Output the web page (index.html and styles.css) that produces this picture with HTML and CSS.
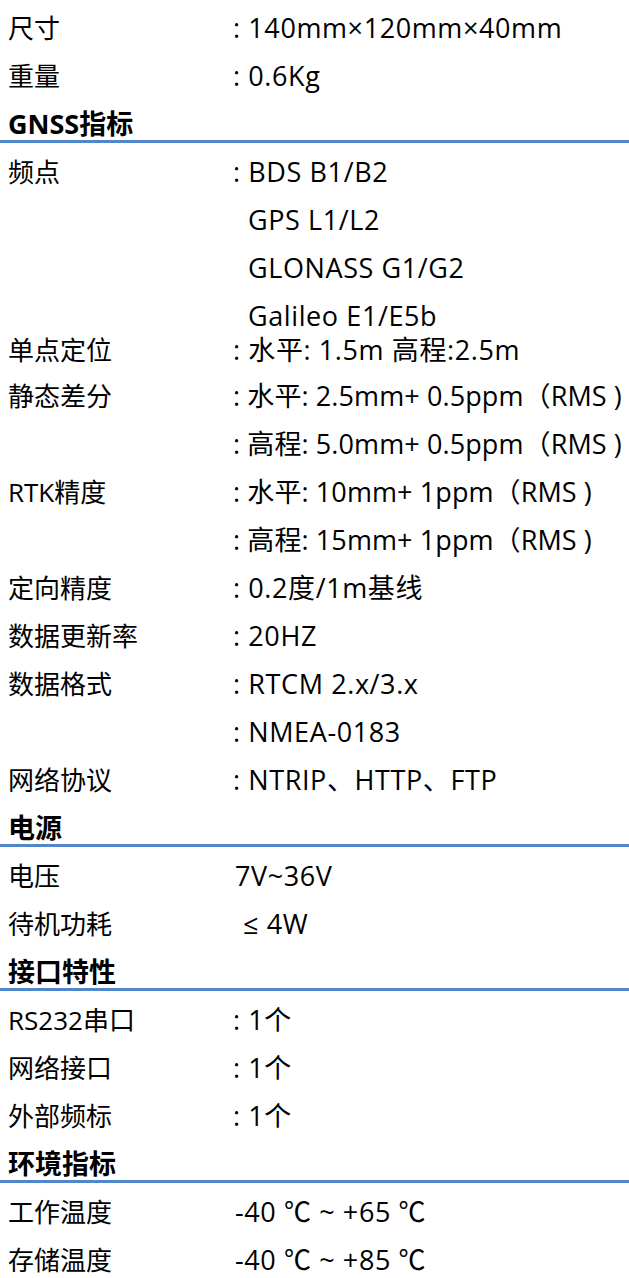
FILE: index.html
```html
<!DOCTYPE html>
<html lang="zh-CN">
<head>
<meta charset="utf-8">
<title>产品参数</title>
<link rel="stylesheet" href="styles.css">
</head>
<body>
<div class="spec">
  <div class="row"><div class="label">尺寸</div><div class="value">: 140mm×120mm×40mm</div></div>
  <div class="row"><div class="label">重量</div><div class="value">: 0.6Kg</div></div>

  <div class="section">GNSS指标</div>
  <div class="row"><div class="label">频点</div>
    <div class="value">
      <div>: BDS B1/B2</div>
      <div class="indent">GPS L1/L2</div>
      <div class="indent">GLONASS G1/G2</div>
      <div class="indent">Galileo E1/E5b</div>
    </div>
  </div>
  <div class="row row-tight"><div class="label">单点定位</div><div class="value">: 水平: 1.5m 高程:2.5m</div></div>
  <div class="row row-nudge"><div class="label">静态差分</div>
    <div class="value">
      <div class="tight">: 水平: 2.5mm+ 0.5ppm（RMS )</div>
      <div class="tight">: 高程: 5.0mm+ 0.5ppm（RMS )</div>
    </div>
  </div>
  <div class="row"><div class="label">RTK精度</div>
    <div class="value">
      <div class="tight">: 水平: 10mm+ 1ppm（RMS )</div>
      <div class="tight">: 高程: 15mm+ 1ppm（RMS )</div>
    </div>
  </div>
  <div class="row"><div class="label">定向精度</div><div class="value">: 0.2度/1m基线</div></div>
  <div class="row"><div class="label">数据更新率</div><div class="value">: 20HZ</div></div>
  <div class="row"><div class="label">数据格式</div>
    <div class="value">
      <div>: RTCM 2.x/3.x</div>
      <div>: NMEA-0183</div>
    </div>
  </div>
  <div class="row"><div class="label">网络协议</div><div class="value">: NTRIP、HTTP、FTP</div></div>

  <div class="section">电源</div>
  <div class="row"><div class="label">电压</div><div class="value value-plain">7V~36V</div></div>
  <div class="row"><div class="label">待机功耗</div><div class="value value-le">≤ 4W</div></div>

  <div class="section">接口特性</div>
  <div class="row"><div class="label">RS232串口</div><div class="value">: 1个</div></div>
  <div class="row"><div class="label">网络接口</div><div class="value">: 1个</div></div>
  <div class="row"><div class="label">外部频标</div><div class="value">: 1个</div></div>

  <div class="section">环境指标</div>
  <div class="row"><div class="label">工作温度</div><div class="value value-plain">-40 ℃ ~ +65 ℃</div></div>
  <div class="row row-last"><div class="label">存储温度</div><div class="value value-plain">-40 ℃ ~ +85 ℃</div></div>
</div>
</body>
</html>
```

FILE: styles.css
```css
html, body {
  margin: 0;
  padding: 0;
  background: #ffffff;
}

body {
  width: 629px;
  overflow: hidden;
  color: #000000;
  font-family: "Open Sans", "Noto Sans CJK SC", sans-serif;
  font-size: 26px;
}

.spec {
  padding-top: 4px;
}

.row {
  display: grid;
  grid-template-columns: 233px 1fr;
  line-height: 48px;
  white-space: nowrap;
}

.label {
  padding-left: 8px;
}

.value {
  font-size: 27px;
  letter-spacing: 0.6px;
}

.tight {
  letter-spacing: 0.1px;
}

.indent {
  padding-left: 15px;
}

.value-plain {
  padding-left: 2px;
}

.value-le {
  padding-left: 10px;
}

.row-tight {
  margin-top: -14px;
}

.row-nudge {
  margin-top: -2px;
}

.section {
  height: 40px;
  line-height: 48px;
  padding-left: 8px;
  font-size: 27px;
  font-weight: 700;
  border-bottom: 3px solid #4f86cc;
  margin-bottom: 5px;
  white-space: nowrap;
}

.row-last {
  border-bottom: 3px solid #4f86cc;
  height: 44px;
}
```
